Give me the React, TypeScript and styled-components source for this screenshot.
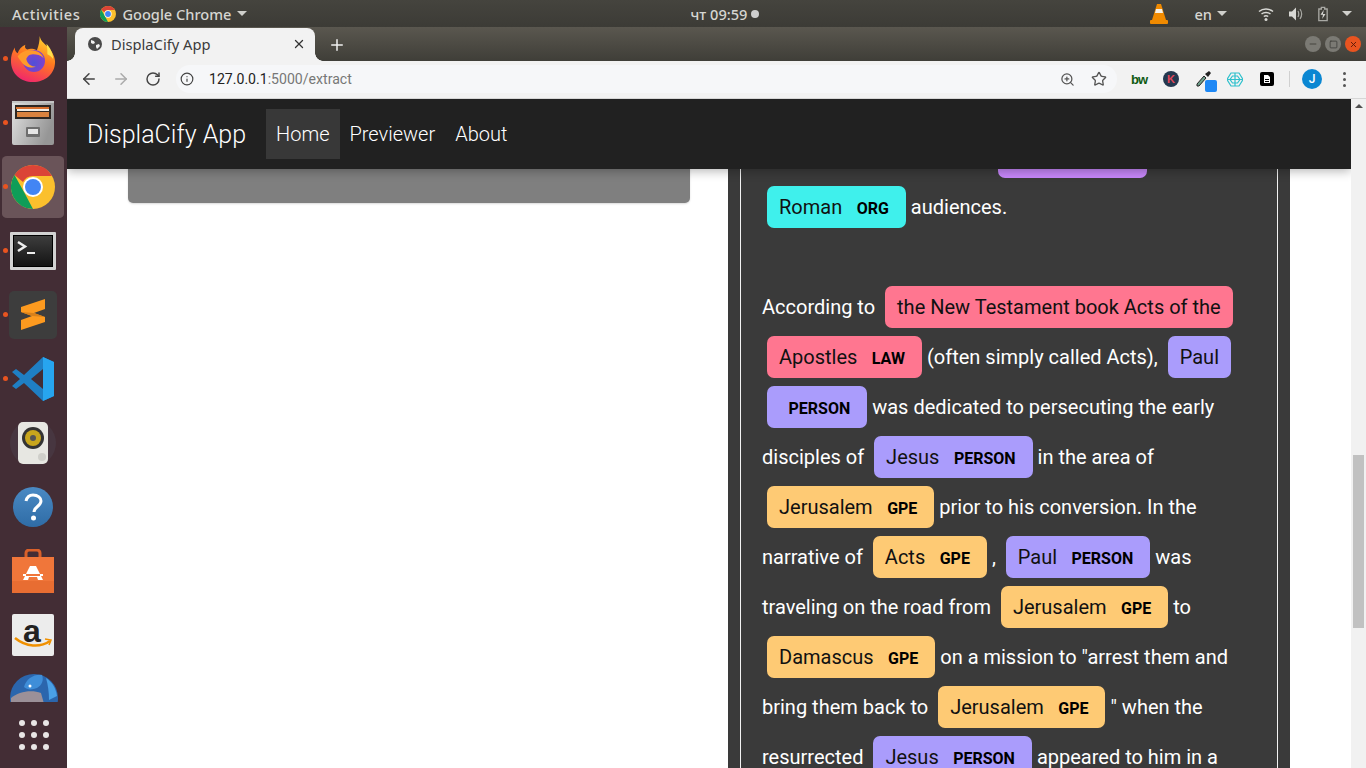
import React from 'react';
import styled, {createGlobalStyle} from "styled-components";
import {ArrowLeft, ArrowRight, Info, Minus, Plus, RotateCw, Square, Star, X, ZoomIn} from "lucide-react";

const Global = createGlobalStyle`
  html, body {
    margin: 0;
    width: 1366px;
    height: 768px;
    overflow: hidden;
    background: #fff;
  }
  * { box-sizing: border-box; }
`

const UI = `"Noto Sans", "Open Sans", sans-serif`

// ---------- dock icons ----------
const Firefox = () => (
    <svg width="46" height="48" viewBox="0 0 48 50">
        <defs>
            <linearGradient id="ffA" x1="0.7" y1="0" x2="0.3" y2="1">
                <stop offset="0" stopColor="#ffd52e"/>
                <stop offset="0.45" stopColor="#ff7a1f"/>
                <stop offset="1" stopColor="#f0246e"/>
            </linearGradient>
            <radialGradient id="ffB" cx="0.5" cy="0.6" r="0.6">
                <stop offset="0" stopColor="#5050d8"/>
                <stop offset="1" stopColor="#8a3ec8"/>
            </radialGradient>
        </defs>
        <path d="M31 1c1 5 4 7 8 11 6 6 8 12 8 16 0 12-10 21-23 21C11 49 1 40 1 27c0-5 1-9 4-14 0 3 1 5 3 6 1-4 4-7 8-9-1 3 0 4 2 5 3-1 6-1 10 1 2-5 3-10 3-15z" fill="url(#ffA)"/>
        <path d="M38 9c4 4 7 10 7 16-2-3-4-4-6-5 0-4 0-7-1-11z" fill="#ffe14d"/>
        <circle cx="25" cy="27" r="11.5" fill="url(#ffB)"/>
        <path d="M8 22c4-5 10-7 17-6 5 1 9 4 10 8-3-3-7-4-11-4-5 0-6 3-7 5 1 5 5 8 10 8-5 2-12 0-15-5-1-2-3-3-4-6z" fill="#ff9a2a"/>
    </svg>
)

const Files = () => (
    <svg width="42" height="44" viewBox="0 0 42 44">
        <defs>
            <linearGradient id="fiA" x1="0" y1="0" x2="1" y2="0.4">
                <stop offset="0" stopColor="#e2e2e2"/>
                <stop offset="1" stopColor="#969696"/>
            </linearGradient>
        </defs>
        <rect x="0" y="0" width="42" height="44" rx="2" fill="url(#fiA)"/>
        <rect x="0" y="0" width="42" height="2" fill="#c4c4c4"/>
        <rect x="3" y="4" width="36" height="14" fill="#2d2622"/>
        <rect x="4" y="6" width="33" height="2" fill="#d9702f"/>
        <rect x="5" y="8" width="32" height="2" fill="#f3efe8"/>
        <rect x="5" y="11" width="32" height="5" fill="#d9823f"/>
        <rect x="14" y="26" width="14" height="10" rx="1" fill="#6e6e6e"/>
        <rect x="16" y="28" width="10" height="5" fill="#e6e6e6"/>
    </svg>
)

const Chrome = ({size}: {size: number}) => (
    <svg width={size} height={size} viewBox="0 0 44 44">
        <circle cx="22" cy="22" r="22" fill="#fbc02d"/>
        <path d="M22 0a22 22 0 0 1 19 11H22a11 11 0 0 0-10 6L3.500 10A22 22 0 0 1 22 0z" fill="#db4437"/>
        <path d="M3.500 10l9.500 17 9 17A22 22 0 0 1 3.500 10z" fill="#0f9d58"/>
        <circle cx="22" cy="22" r="10" fill="#fff"/>
        <circle cx="22" cy="22" r="8" fill="#4285f4"/>
    </svg>
)

const Terminal = () => (
    <svg width="46" height="38" viewBox="0 0 46 38">
        <defs>
            <linearGradient id="teA" x1="0" y1="0" x2="0" y2="1">
                <stop offset="0" stopColor="#3d3d3d"/>
                <stop offset="1" stopColor="#141414"/>
            </linearGradient>
        </defs>
        <rect width="46" height="38" rx="1" fill="#d2d2d2"/>
        <rect x="3" y="3" width="40" height="32" fill="#000"/>
        <rect x="4" y="4" width="38" height="30" fill="url(#teA)"/>
        <path d="M8 10l7 4.500-7 4.500" fill="none" stroke="#eee" strokeWidth="2.500"/>
        <rect x="17" y="20" width="8" height="2" fill="#eee"/>
    </svg>
)

const Sublime = () => (
    <svg width="48" height="48" viewBox="0 0 48 48">
        <rect width="48" height="48" rx="5" fill="#3d3d3d"/>
        <path d="M12 16L36 8V18L25 22 36 26V31L12 39V29L23 25 12 21z" fill="#fd9a1f"/>
        <path d="M12 21L25 22 36 26 23 25z" fill="#d9801a"/>
    </svg>
)

const VSCode = () => (
    <svg width="42" height="44" viewBox="0 0 42 44">
        <path d="M31 0l11 5v34l-11 5L12 26 4 32 0 29l8-7-8-7 4-3 8 6z" fill="#1f7fc4"/>
        <path d="M31 0l11 5v34l-11 5z" fill="#27a5ef"/>
        <path d="M31 12L19 22l12 10z" fill="#432d35"/>
    </svg>
)

const Speaker = () => (
    <svg width="48" height="44" viewBox="0 0 48 44">
        <circle cx="24" cy="22" r="23" fill="#5c6b82" opacity="0.15"/>
        <rect x="9" y="1" width="30" height="42" rx="5" fill="#e7e7e2"/>
        <circle cx="24" cy="17" r="11" fill="#333"/>
        <circle cx="24" cy="17" r="8" fill="#c8a61d"/>
        <circle cx="24" cy="17" r="3" fill="#555"/>
        <circle cx="33" cy="36" r="4" fill="#cfcfca"/>
    </svg>
)

const Help = () => (
    <svg width="40" height="40" viewBox="0 0 40 40">
        <defs>
            <linearGradient id="heA" x1="0" y1="0" x2="0" y2="1">
                <stop offset="0" stopColor="#4a8ac4"/>
                <stop offset="1" stopColor="#2f6ca6"/>
            </linearGradient>
        </defs>
        <circle cx="20" cy="20" r="20" fill="url(#heA)"/>
        <path d="M13 14c1-4 4-6 7-6 5 0 8 3 8 6 0 5-7 6-7 11" fill="none" stroke="#fff" strokeWidth="3"/>
        <circle cx="20.500" cy="31" r="2.500" fill="#fff"/>
    </svg>
)

const Software = () => (
    <svg width="42" height="44" viewBox="0 0 42 44">
        <path d="M14 10V4c0-2 2-3 3-3h8c1 0 3 1 3 3v6" fill="none" stroke="#d9602a" strokeWidth="3"/>
        <rect x="0" y="8" width="42" height="36" fill="#f0763a"/>
        <rect x="0" y="32" width="42" height="12" fill="#e86d32"/>
        <path d="M18 17h6l4 8h3v2h-2l2 4h-5l-1-3h-8l-1 3h-5l2-4h-2v-2h3z" fill="#fff"/>
        <rect x="14" y="25" width="14" height="2" fill="#f0763a"/>
    </svg>
)

const AmazonA = styled.text`
  font-family: "Liberation Sans", sans-serif;
  font-size: 32px;
  font-weight: 700;
  fill: #222;
`

const Amazon = () => (
    <svg width="42" height="42" viewBox="0 0 42 42">
        <rect width="42" height="42" rx="2" fill="#ececec"/>
        <AmazonA x="11" y="28">a</AmazonA>
        <path d="M3 24c11 9 25 10 35 3" fill="none" stroke="#f09000" strokeWidth="2.500"/>
        <path d="M33 25l6 1-2 5" fill="none" stroke="#f09000" strokeWidth="1.500"/>
    </svg>
)

const Thunderbird = () => (
    <svg width="48" height="44" viewBox="0 0 48 44">
        <circle cx="24" cy="24" r="24" fill="#2b66ad"/>
        <path d="M1 24c7-6 20-9 30-5l7 25H1z" fill="#9b9098"/>
        <path d="M14 13C16 5 24 0 32 1c2 5 0 10-5 13-5 2-10 2-13-1z" fill="#3f8ed8"/>
        <circle cx="20" cy="12" r="1.500" fill="#fff"/>
        <path d="M36 4c6 4 10 10 11 18l-8 4c0-8-1-15-3-22z" fill="#4aa0e6"/>
    </svg>
)

// ---------- tray and toolbar icons ----------
const Cone = () => (
    <svg width="18" height="22" viewBox="0 0 18 22">
        <path d="M7 1h4l5 16H2z" fill="#f08a00"/>
        <path d="M6 6h6l1 4H5z" fill="#f4efe6"/>
        <rect y="17" width="18" height="4" rx="1" fill="#f08a00"/>
    </svg>
)

const Wifi = () => (
    <svg width="16" height="16" viewBox="0 0 16 16" fill="none" stroke="#d8d8d4" strokeWidth="1.500">
        <path d="M1 5.500c4-3.500 10-3.500 14 0M3.500 8c2.500-2 6.500-2 9 0M5.800 10.500c1.300-1 3.100-1 4.400 0"/>
        <circle cx="8" cy="13.500" r="1.500" fill="#d8d8d4" stroke="none"/>
    </svg>
)

const Volume = () => (
    <svg width="16" height="16" viewBox="0 0 16 16" fill="none" stroke="#a9a9a4" strokeWidth="1.200">
        <path d="M1 5.500h3l4-4v13l-4-4H1z" fill="#d8d8d4" stroke="none"/>
        <path d="M10 5c1 2 1 4 0 6M12 3c2 3 2 7 0 10"/>
    </svg>
)

const Battery = () => (
    <svg width="10" height="16" viewBox="0 0 12 18">
        <path d="M4 1h4v2h3v14H1V3h3z" fill="none" stroke="#a9a9a4" strokeWidth="1.600"/>
        <path d="M7 4L3 10h3l-1 5 4-6H6z" fill="#d8d8d4"/>
    </svg>
)

const Caret = styled.span`
  display: inline-block;
  width: 0;
  height: 0;
  border-left: 5px solid transparent;
  border-right: 5px solid transparent;
  border-top: 5px solid #d0d0cc;
`

const TabGlobe = () => (
    <svg width="14" height="14" viewBox="0 0 14 14">
        <circle cx="7" cy="7" r="7" fill="#4a4a4a"/>
        <path d="M3 3l3 1 1 2-2 1-2-1zM8 8l3-1 1 2-3 3-1-2z" fill="#f2f2f2"/>
    </svg>
)

const Dropper = () => (
    <svg width="22" height="22" viewBox="0 0 22 22">
        <path d="M2 14L9 6l2 2-7 8H2z" fill="#6fa08c" stroke="#222" strokeWidth="1"/>
        <path d="M10 4l4-3 2 2-3 4z" fill="#222"/>
        <rect x="10" y="10" width="12" height="12" rx="2" fill="#1e88f5"/>
    </svg>
)

const Web = () => (
    <svg width="16" height="15" viewBox="0 0 16 15" fill="none" stroke="#2fc0cc" strokeWidth="1.200">
        <path d="M4 1h8l4 6.500-4 6.500H4L0 7.500z"/>
        <path d="M5.500 4h5L13 7.500 10.500 11h-5L3 7.500zM8 1v13M0 7.500h16"/>
    </svg>
)

const Doc = () => (
    <svg width="14" height="14" viewBox="0 0 14 14">
        <rect width="14" height="14" rx="2" fill="#000"/>
        <path d="M4 3h4l2 2v6H4z" fill="#fff"/>
        <rect x="5" y="7" width="4" height="1" fill="#000"/>
        <rect x="5" y="9" width="4" height="1" fill="#000"/>
    </svg>
)

// ---------- entity marks ----------
const kinds: Record<string, string> = {
    PERSON: "#aa9cfc",
    GPE: "#feca74",
    ORG: "#3ff0ec",
    LAW: "#ff7690",
    NORP: "#c887fb",
};

const Ent = ({text, label}: {text: string, label: string}) => (
    <Mark $color={kinds[label]}>{text}{" "}<Label>{label}</Label>{" "}</Mark>
)

const App = () => {
    return (
        <Screen>
            <Global/>
            <TopBar>
                <TopLeft>
                    <Activities>Activities</Activities>
                    <AppMenu>
                        <Chrome size={16}/>
                        <TopText>Google Chrome</TopText>
                        <Caret/>
                    </AppMenu>
                </TopLeft>
                <Clock>
                    <TopText>чт 09:59</TopText>
                    <ClockDot/>
                </Clock>
                <Tray>
                    <ConeSlot><Cone/></ConeSlot>
                    <Lang><TopText>en</TopText><Caret/></Lang>
                    <Status>
                        <Wifi/>
                        <Volume/>
                        <Battery/>
                        <Caret/>
                    </Status>
                </Tray>
            </TopBar>
            <Desktop>
                <Dock>
                    <DockItem $running><Firefox/></DockItem>
                    <DockItem $running><Files/></DockItem>
                    <DockItem $running $active><Chrome size={44}/></DockItem>
                    <DockItem $running><Terminal/></DockItem>
                    <DockItem $running><Sublime/></DockItem>
                    <DockItem $running><VSCode/></DockItem>
                    <DockItem><Speaker/></DockItem>
                    <DockItem><Help/></DockItem>
                    <DockItem><Software/></DockItem>
                    <DockItem><Amazon/></DockItem>
                    <CutItem><Thunderbird/></CutItem>
                    <AppGrid>
                        {Array.from({length: 9}).map((_, i) => <GridDot key={i}/>)}
                    </AppGrid>
                </Dock>
                <Browser>
                    <TabStrip>
                        <Tab>
                            <TabGlobe/>
                            <TabTitle>DisplaCify App</TabTitle>
                            <X size={14} color="#333" strokeWidth={2.2}/>
                        </Tab>
                        <NewTab><Plus size={18} color="#f0f0f0" strokeWidth={2}/></NewTab>
                        <WinButtons>
                            <WinButton><Minus size={10} color="#3a3a36" strokeWidth={2}/></WinButton>
                            <WinButton><Square size={9} color="#3a3a36" strokeWidth={2}/></WinButton>
                            <WinButton $close><X size={9} color="#5c1a08" strokeWidth={2.5}/></WinButton>
                        </WinButtons>
                    </TabStrip>
                    <Toolbar>
                        <NavIcon><ArrowLeft size={18} color="#444" strokeWidth={2}/></NavIcon>
                        <NavIcon><ArrowRight size={18} color="#aaa" strokeWidth={2}/></NavIcon>
                        <NavIcon><RotateCw size={16} color="#444" strokeWidth={2.2}/></NavIcon>
                        <Omnibox>
                            <Info size={14} color="#444" strokeWidth={2}/>
                            <Url>127.0.0.1<UrlRest>:5000/extract</UrlRest></Url>
                            <OmniRight>
                                <ZoomIn size={15} color="#555" strokeWidth={2}/>
                                <Star size={16} color="#555" strokeWidth={2}/>
                            </OmniRight>
                        </Omnibox>
                        <Extensions>
                            <ExtSlot><Bw>bw</Bw></ExtSlot>
                            <ExtSlot><KBadge>K</KBadge></ExtSlot>
                            <ExtSlot $shifted><Dropper/></ExtSlot>
                            <ExtSlot><Web/></ExtSlot>
                            <ExtSlot><Doc/></ExtSlot>
                        </Extensions>
                        <ToolSep/>
                        <Avatar>J</Avatar>
                        <Kebab><KebabDot/><KebabDot/><KebabDot/></Kebab>
                    </Toolbar>
                    <Viewport>
                        <Page>
                            <NavBar>
                                <Brand>DisplaCify App</Brand>
                                <NavLink $active>Home</NavLink>
                                <NavLink>Previewer</NavLink>
                                <NavLink>About</NavLink>
                            </NavBar>
                            <Columns>
                                <LeftCard/>
                                <ResultPanel>
                                    <ResultBox>
                                        citizen to minister to both <Ent text="Jewish" label="NORP"/> and <Ent text="Roman" label="ORG"/>audiences.
                                        <br/>
                                        <br/>
                                        According to <Ent text="the New Testament book Acts of the Apostles" label="LAW"/>(often simply called Acts), <Ent text="Paul" label="PERSON"/>was dedicated to persecuting the early disciples of <Ent text="Jesus" label="PERSON"/>in the area of <Ent text="Jerusalem" label="GPE"/>prior to his conversion. In the narrative of <Ent text="Acts" label="GPE"/>, <Ent text="Paul" label="PERSON"/>was traveling on the road from <Ent text="Jerusalem" label="GPE"/>to <Ent text="Damascus" label="GPE"/>on a mission to "arrest them and bring them back to <Ent text="Jerusalem" label="GPE"/>" when the resurrected <Ent text="Jesus" label="PERSON"/>appeared to him in a
                                    </ResultBox>
                                </ResultPanel>
                            </Columns>
                        </Page>
                        <Scrollbar>
                            <ScrollUp/>
                            <ScrollThumb/>
                        </Scrollbar>
                    </Viewport>
                </Browser>
            </Desktop>
        </Screen>
    );
};

export default App;

const Screen = styled.div`
  width: 1366px;
  height: 768px;
  display: flex;
  flex-direction: column;
  overflow: hidden;
`

const TopBar = styled.header`
  height: 27px;
  flex: none;
  display: grid;
  grid-template-columns: 1fr auto 1fr;
  align-items: center;
  padding: 0 0 0 12px;
  background: linear-gradient(#45443e, #3c3b36);
`

const TopLeft = styled.div`
  display: flex;
  align-items: center;
  gap: 20px;
`

const TopText = styled.span`
  font-family: ${UI};
  font-size: 14.6px;
  font-weight: 500;
  color: #d6d6d2;
  white-space: nowrap;
`

const Activities = styled(TopText)`
  letter-spacing: 0.55px;
`

const AppMenu = styled.div`
  display: flex;
  align-items: center;
  gap: 6px;
`

const Clock = styled.div`
  margin-left: 72px;
  display: flex;
  align-items: center;
  gap: 4px;
`

const ClockDot = styled.span`
  width: 8px;
  height: 8px;
  border-radius: 50%;
  background: #cfcfcf;
`

const Tray = styled.div`
  display: flex;
  align-items: center;
  justify-content: flex-end;
`

const ConeSlot = styled.div`
  display: flex;
  margin-right: 26px;
`

const Lang = styled.div`
  display: flex;
  align-items: center;
  gap: 5px;
  margin-right: 31px;
`

const Status = styled.div`
  display: flex;
  align-items: center;
  gap: 14px;
  padding-right: 14px;
`

const Desktop = styled.div`
  flex: 1;
  display: flex;
  min-height: 0;
`

const Dock = styled.nav`
  width: 67px;
  flex: none;
  display: flex;
  flex-direction: column;
  background: #432d35;
`

const DockItem = styled.div<{$running?: boolean, $active?: boolean}>`
  height: 64px;
  flex: none;
  margin: 0 3px 0 2px;
  padding: 1px 0;
  display: flex;
  align-items: center;
  justify-content: center;
  position: relative;
  border-radius: 5px;
  background: ${props => props.$active ? "#6a5459" : "transparent"};
  background-clip: content-box;

  &::before {
    content: "";
    display: ${props => props.$running ? "block" : "none"};
    position: absolute;
    left: 1px;
    top: 29px;
    width: 5px;
    height: 5px;
    border-radius: 50%;
    background: #e95420;
  }
`

const CutItem = styled.div`
  height: 35px;
  flex: none;
  overflow: hidden;
  display: flex;
  justify-content: center;
  padding-top: 7px;
`

const AppGrid = styled.div`
  width: 30px;
  margin: 18px auto 0;
  display: grid;
  grid-template-columns: repeat(3, 6px);
  gap: 6px;
`

const GridDot = styled.span`
  width: 6px;
  height: 6px;
  border-radius: 50%;
  background: #e8e6e6;
`

const Browser = styled.main`
  flex: 1;
  min-width: 0;
  display: flex;
  flex-direction: column;
`

const TabStrip = styled.div`
  height: 34px;
  flex: none;
  display: flex;
  align-items: flex-end;
  padding-left: 8px;
  background: linear-gradient(#5a574f, #3f3e38);
`

const Tab = styled.div`
  width: 240px;
  height: 33px;
  display: flex;
  align-items: center;
  padding: 0 9px 1px 13px;
  gap: 9px;
  position: relative;
  border-radius: 8px 8px 0 0;
  background: #f2f2f2;

  &::before, &::after {
    content: "";
    position: absolute;
    bottom: 0;
    width: 8px;
    height: 8px;
  }

  &::before {
    left: -8px;
    background: radial-gradient(circle at 0 0, transparent 7.5px, #f2f2f2 8px);
  }

  &::after {
    right: -8px;
    background: radial-gradient(circle at 100% 0, transparent 7.5px, #f2f2f2 8px);
  }
`

const TabTitle = styled.span`
  flex: 1;
  font-family: ${UI};
  font-size: 14.7px;
  color: #3c3c3c;
`

const NewTab = styled.div`
  height: 33px;
  display: flex;
  align-items: center;
  margin-left: 13px;
`

const WinButtons = styled.div`
  margin-left: auto;
  height: 34px;
  display: flex;
  align-items: center;
  gap: 4px;
  padding-right: 5px;
`

const WinButton = styled.div<{$close?: boolean}>`
  width: 16px;
  height: 16px;
  border-radius: 50%;
  display: flex;
  align-items: center;
  justify-content: center;
  background: ${props => props.$close ? "#e95420" : "#7b7a74"};
`

const Toolbar = styled.div`
  height: 38px;
  flex: none;
  display: flex;
  align-items: center;
  padding: 0 0 1px 13px;
  border-bottom: 1px solid #d6d6d6;
  background: #f2f2f2;
`

const NavIcon = styled.div`
  width: 18px;
  height: 18px;
  margin-right: 14px;
  display: flex;
  align-items: center;
  justify-content: center;
`

const Omnibox = styled.div`
  width: 941px;
  height: 28px;
  display: flex;
  align-items: center;
  padding: 0 10px 0 4px;
  gap: 15px;
  border-radius: 14px;
  background: #f6f7f9;
`

const Url = styled.span`
  font-family: "Roboto", sans-serif;
  font-size: 14.1px;
  color: #222;
`

const UrlRest = styled.span`
  color: #777;
`

const OmniRight = styled.div`
  margin-left: auto;
  display: flex;
  align-items: center;
  gap: 16px;
`

const Extensions = styled.div`
  display: flex;
  align-items: center;
  padding-left: 6px;
  margin-right: 6px;
`

const ExtSlot = styled.div<{$shifted?: boolean}>`
  width: 32px;
  display: flex;
  align-items: center;
  justify-content: center;
  padding: ${props => props.$shifted ? "3px 0 0 6px" : "0"};
`

const Bw = styled.span`
  font-family: "Liberation Sans", sans-serif;
  font-size: 13px;
  font-weight: 700;
  letter-spacing: -1px;
  color: #0f5a12;
`

const KBadge = styled.span`
  width: 16px;
  height: 16px;
  border-radius: 50%;
  display: flex;
  align-items: center;
  justify-content: center;
  font-family: "Liberation Sans", sans-serif;
  font-size: 11px;
  font-weight: 700;
  color: #e2475a;
  background: #24384f;
`

const ToolSep = styled.span`
  width: 1px;
  height: 16px;
  background: #d0d0d0;
`

const Avatar = styled.span`
  width: 20px;
  height: 20px;
  margin-left: 12px;
  border-radius: 50%;
  display: flex;
  align-items: center;
  justify-content: center;
  font-family: "Roboto", sans-serif;
  font-size: 12px;
  font-weight: 500;
  color: #fff;
  background: #0b87d2;
`

const Kebab = styled.div`
  margin-left: 21px;
  display: flex;
  flex-direction: column;
  gap: 3px;
`

const KebabDot = styled.span`
  width: 3px;
  height: 3px;
  border-radius: 50%;
  background: #555;
`

const Viewport = styled.div`
  flex: 1;
  min-height: 0;
  display: flex;
`

const Page = styled.div`
  flex: 1;
  min-width: 0;
  overflow: hidden;
  background: #fff;
`

const NavBar = styled.div`
  height: 70px;
  display: flex;
  align-items: center;
  padding: 0 20px;
  position: relative;
  z-index: 2;
  background: #212121;
  box-shadow: 0 2px 10px rgba(0, 0, 0, 0.3);
`

const Brand = styled.span`
  margin-right: 20px;
  font-family: "Roboto", sans-serif;
  font-size: 25px;
  font-weight: 300;
  color: #fff;
`

const NavLink = styled.a<{$active?: boolean}>`
  height: 50px;
  display: flex;
  align-items: center;
  padding: 0 10px;
  font-family: "Roboto", sans-serif;
  font-size: 20px;
  font-weight: 300;
  color: #fff;
  background: ${props => props.$active ? "#383838" : "transparent"};
`

const Columns = styled.div`
  margin-top: -70px;
  padding: 0 61px;
  display: grid;
  grid-template-columns: 562px 562px;
  gap: 38px;
  align-items: start;
`

const LeftCard = styled.div`
  height: 104px;
  border-radius: 0 0 5px 5px;
  background: #7f7f7f;
  box-shadow: 0 1px 2px rgba(0, 0, 0, 0.15);
`

const ResultPanel = styled.section`
  padding: 12px 12px 0;
  background: #3a3a3a;
`

const ResultBox = styled.div`
  border: 1px solid #f2f2f2;
  padding: 20px 21px;
  font-family: "Roboto", sans-serif;
  font-size: 20px;
  line-height: 50px;
  color: #fff;
`

const Mark = styled.mark<{$color: string}>`
  padding: 9px 12px;
  margin: 0 5px;
  line-height: 1;
  border-radius: 7px;
  color: #111;
  background: ${props => props.$color};
  -webkit-box-decoration-break: clone;
  box-decoration-break: clone;
`

const Label = styled.span`
  margin-left: 9.5px;
  font-size: 16px;
  font-weight: 700;
  line-height: 1;
  color: #000;
  vertical-align: middle;
`

const Scrollbar = styled.div`
  width: 15px;
  flex: none;
  display: flex;
  flex-direction: column;
  align-items: center;
  background: #f1f1f1;
`

const ScrollUp = styled.span`
  width: 0;
  height: 0;
  margin-top: 5px;
  border-left: 4px solid transparent;
  border-right: 4px solid transparent;
  border-bottom: 4px solid #505050;
`

const ScrollThumb = styled.div`
  width: 11px;
  height: 173px;
  margin-top: 347px;
  background: #c1c1c1;
`
